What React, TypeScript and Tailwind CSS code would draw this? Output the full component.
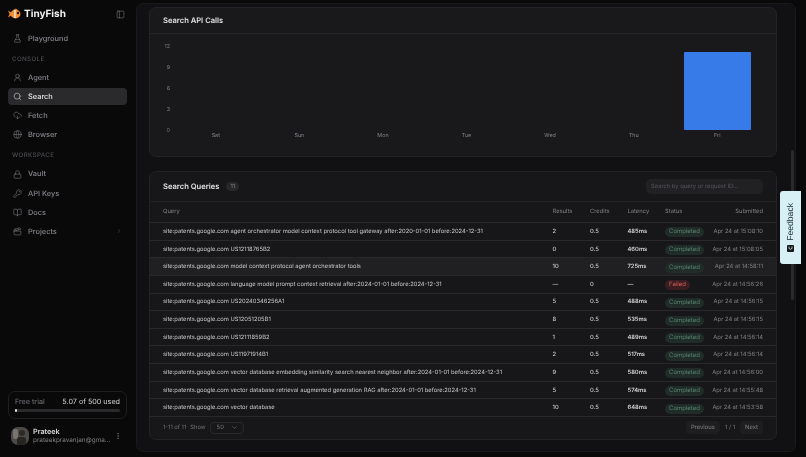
import { FlaskConical, UserRound, Search, CloudDownload, Globe, Lock, KeyRound, BookOpen, Clapperboard, PanelLeft, ChevronRight, ChevronDown, EllipsisVertical } from "lucide-react";
import type { ComponentType } from "react";

const font = "font-['Inter',sans-serif]";

function NavItem({ icon: Icon, label, active, chevron }: { icon: ComponentType<any>; label: string; active?: boolean; chevron?: boolean }) {
  return (
    <div className={`flex h-[17px] items-center gap-[6px] rounded-[4px] px-[4px] ${active ? "bg-[#2a2a2c] text-[#e4e4e6]" : "text-[#85858a]"}`}>
      <Icon size={9} strokeWidth={1.4} className="ml-[1px] shrink-0" />
      <span className="flex-1 text-[7.4px] font-medium leading-none">{label}</span>
      {chevron && <ChevronRight size={6} className="mr-[1px] text-[#55555a]" />}
    </div>
  );
}

function SectionLabel({ children }: { children: string }) {
  return <div className="px-[4px] pb-[4.5px] pt-[6.5px] text-[6.2px] font-medium leading-[7px] tracking-[0.06em] text-[#4d4d52]">{children}</div>;
}

function Sidebar() {
  return (
    <aside className="flex h-full w-[136px] shrink-0 flex-col pl-[8px] pr-[9px]">
      <div className="flex h-[28px] items-center justify-between pr-[2px]">
        <div className="flex items-center gap-[3px]">
          <svg width="13" height="12" viewBox="0 0 13 12">
            <path d="M0 2.5 L4 5 L4 7 L0 9.5 L1.5 6 Z" fill="#f0862c" />
            <ellipse cx="7.5" cy="6" rx="5" ry="4.4" fill="#f58f2e" />
            <path d="M5.5 1.8 L8 0.6 L9.5 2 Z" fill="#f0862c" />
            <rect x="6.2" y="2" width="1.4" height="8" fill="#fdf1df" />
            <circle cx="10" cy="5" r="1.2" fill="#1b1209" />
          </svg>
          <span className="text-[10px] font-bold leading-none text-[#f2f2f2]">TinyFish</span>
        </div>
        <PanelLeft size={9} strokeWidth={1.3} className="text-[#8a8a8e]" />
      </div>
      <div className="flex flex-col gap-[2.1px] pt-[2px]">
        <NavItem icon={FlaskConical} label="Playground" />
        <SectionLabel>CONSOLE</SectionLabel>
        <NavItem icon={UserRound} label="Agent" />
        <NavItem icon={Search} label="Search" active />
        <NavItem icon={CloudDownload} label="Fetch" />
        <NavItem icon={Globe} label="Browser" />
        <SectionLabel>WORKSPACE</SectionLabel>
        <NavItem icon={Lock} label="Vault" />
        <NavItem icon={KeyRound} label="API Keys" />
        <NavItem icon={BookOpen} label="Docs" />
        <NavItem icon={Clapperboard} label="Projects" chevron />
      </div>
      <div className="mt-auto">
        <div className="flex h-[28px] flex-col justify-center gap-[4px] rounded-[7px] border border-[#1e1e20] px-[6px]">
          <div className="flex items-center justify-between text-[7.2px] leading-none">
            <span className="text-[#77777b]">Free trial</span>
            <span className="text-[#d4d4d6]">5.07 of 500 used</span>
          </div>
          <div className="h-[3px] rounded-full bg-[#2a2a2d]">
            <div className="h-full w-[1.5px] rounded-full bg-[#e0e0e0]" />
          </div>
        </div>
        <div className="flex h-[38px] items-center gap-[4px] pb-[4px] pl-[3px] pr-[5px]">
          <div className="relative h-[18px] w-[18px] shrink-0 overflow-hidden rounded-[7px] bg-[#4c4a47]">
            <div className="absolute left-[2px] top-[2px] h-[10px] w-[5px] rounded-[2px] bg-[#77736f]" />
            <div className="absolute left-[8px] top-[3px] h-[6px] w-[6px] rounded-full bg-[#2c2a28]" />
            <div className="absolute bottom-0 left-[6px] h-[8px] w-[9px] rounded-t-[3px] bg-[#262523]" />
          </div>
          <div className="min-w-0 flex-1">
            <div className="text-[7.2px] font-semibold leading-[9px] text-[#dcdcde]">Prateek</div>
            <div className="whitespace-nowrap text-[6.4px] leading-[9px] text-[#808084]">prateekpravanjan@gma...</div>
          </div>
          <EllipsisVertical size={8} className="shrink-0 text-[#77777b]" />
        </div>
      </div>
    </aside>
  );
}

const days = ["Sat", "Sun", "Mon", "Tue", "Wed", "Thu", "Fri"];

function ChartCard() {
  return (
    <section className="rounded-[7px] border border-[#232326] bg-[#19191b]">
      <div className="flex h-[26px] items-center border-b border-[#262629] px-[13px]">
        <h2 className="text-[7.6px] font-semibold leading-none text-[#e0e0e2]">Search API Calls</h2>
      </div>
      <div className="flex pb-[17px] pl-[13px] pr-[14px] pt-[8.5px]">
        <div className="flex h-[92px] w-[7px] flex-col justify-between text-right text-[5.4px] leading-[8px] text-[#7c7c80]">
          <span>12</span><span>9</span><span>6</span><span>3</span><span>0</span>
        </div>
        <div className="ml-[4px] flex flex-1 pr-[3px] pt-[1.5px]">
          {days.map((d) => (
            <div key={d} className="flex flex-1 flex-col items-center">
              <div className="flex h-[86px] w-full items-end justify-center">
                {d === "Fri" && <div className="h-[78.5px] w-[67px] rounded-[1px] bg-[#377be9]" />}
              </div>
              <span className="pt-[3px] text-[5.4px] leading-[6px] text-[#85858a]">{d}</span>
            </div>
          ))}
        </div>
      </div>
    </section>
  );
}

type Row = { q: string; r: string; c: string; l: string; s: "Completed" | "Failed"; t: string; hi?: boolean };
const g = "site:patents.google.com ";
const rows: Row[] = [
  { q: g + "agent orchestrator model context protocol tool gateway after:2020-01-01 before:2024-12-31", r: "2", c: "0.5", l: "485ms", s: "Completed", t: "Apr 24 at 15:08:10" },
  { q: g + "US12118765B2", r: "0", c: "0.5", l: "460ms", s: "Completed", t: "Apr 24 at 15:08:05" },
  { q: g + "model context protocol agent orchestrator tools", r: "10", c: "0.5", l: "725ms", s: "Completed", t: "Apr 24 at 14:58:11", hi: true },
  { q: g + "language model prompt context retrieval after:2024-01-01 before:2024-12-31", r: "—", c: "0", l: "—", s: "Failed", t: "Apr 24 at 14:56:26" },
  { q: g + "US20240346256A1", r: "5", c: "0.5", l: "488ms", s: "Completed", t: "Apr 24 at 14:56:15" },
  { q: g + "US12051205B1", r: "8", c: "0.5", l: "535ms", s: "Completed", t: "Apr 24 at 14:56:15" },
  { q: g + "US12111859B2", r: "1", c: "0.5", l: "489ms", s: "Completed", t: "Apr 24 at 14:56:14" },
  { q: g + "US11971914B1", r: "2", c: "0.5", l: "517ms", s: "Completed", t: "Apr 24 at 14:56:14" },
  { q: g + "vector database embedding similarity search nearest neighbor after:2024-01-01 before:2024-12-31", r: "9", c: "0.5", l: "580ms", s: "Completed", t: "Apr 24 at 14:56:00" },
  { q: g + "vector database retrieval augmented generation RAG after:2024-01-01 before:2024-12-31", r: "5", c: "0.5", l: "574ms", s: "Completed", t: "Apr 24 at 14:55:48" },
  { q: g + "vector database", r: "10", c: "0.5", l: "648ms", s: "Completed", t: "Apr 24 at 14:53:58" },
];

const grid = "grid grid-cols-[1fr_37.5px_37.5px_37.5px_46px_52px] items-center px-[13px]";

function StatusBadge({ s }: { s: Row["s"] }) {
  return s === "Completed" ? (
    <span className="inline-flex h-[10px] items-center rounded-full bg-[#1f2c28] px-[4px] text-[6px] leading-none text-[#5a8270]">Completed</span>
  ) : (
    <span className="inline-flex h-[10px] items-center rounded-full bg-[#3a1d20] px-[4px] text-[6px] leading-none text-[#d95f5c]">Failed</span>
  );
}

function QueriesCard() {
  return (
    <section className="rounded-[7px] border border-[#232326] bg-[#171719]">
      <div className="flex h-[30px] items-center justify-between border-b border-[#232326] px-[13px]">
        <div className="flex items-center gap-[7px]">
          <h2 className="text-[7.6px] font-semibold leading-none text-[#e0e0e2]">Search Queries</h2>
          <span className="flex h-[9px] items-center rounded-full bg-[#27272a] px-[4px] text-[5.8px] leading-none text-[#8a8a8e]">11</span>
        </div>
        <div className="flex h-[15px] w-[117px] items-center rounded-[5px] bg-[#212124] px-[5px] text-[5.8px] leading-none text-[#56565a]">Search by query or request ID...</div>
      </div>
      <div className={`${grid} h-[21px] border-b border-[#29292c] text-[5.8px] leading-none text-[#808084]`}>
        <span>Query</span><span>Results</span><span>Credits</span><span>Latency</span><span>Status</span><span className="text-right">Submitted</span>
      </div>
      {rows.map((row) => (
        <div key={row.q} className={`${grid} h-[17.65px] border-b border-[#29292c] pt-[1px] text-[5.8px] leading-none ${row.hi ? "bg-[#202022]" : ""}`}>
          <span className="whitespace-nowrap text-[#cacacd]">{row.q}</span>
          <span className="font-medium text-[#cacacd]">{row.r}</span>
          <span className="font-medium text-[#cacacd]">{row.c}</span>
          <span className="font-semibold text-[#d4d4d6]">{row.l}</span>
          <span className="flex pt-[1px]"><StatusBadge s={row.s} /></span>
          <span className="whitespace-nowrap text-right text-[#828286]">{row.t}</span>
        </div>
      ))}
      <div className="flex h-[21.5px] items-center justify-between px-[13px] text-[5.8px] leading-none text-[#707074]">
        <div className="flex items-center gap-[4px]">
          <span>1-11 of 11</span>
          <span>Show</span>
          <div className="flex h-[12px] w-[34px] items-center justify-between rounded-[4px] border border-[#29292c] pl-[6px] pr-[5px] text-[#77777b]">
            <span>50</span>
            <ChevronDown size={7} />
          </div>
        </div>
        <div className="flex items-center gap-[4px]">
          <span className="flex h-[13px] items-center rounded-[4px] bg-[#1e1e20] px-[5px] font-medium text-[#77777b]">Previous</span>
          <span className="px-[1px] text-[#77777b]">1 / 1</span>
          <span className="flex h-[13px] items-center rounded-[4px] bg-[#1e1e20] px-[5px] font-medium text-[#77777b]">Next</span>
        </div>
      </div>
    </section>
  );
}

export default function App() {
  return (
    <div className={`${font} relative flex h-[457px] w-[806px] overflow-hidden bg-[#09090a] blur-[0.3px] [text-rendering:geometricPrecision]`}>
      <Sidebar />
      <main className="mb-[5px] mr-[10px] mt-[3px] flex-1 overflow-hidden rounded-[7px] border border-[#19191b] bg-[#111113]">
        <div className="flex h-full flex-col gap-[14px] pl-[12px] pr-[18px] pt-[3px]">
          <ChartCard />
          <QueriesCard />
        </div>
      </main>
      <div className="absolute left-[791px] top-[150px] h-[150px] w-[3px] rounded-full bg-[#2a2a2c]" />
      <div className="absolute left-[780px] top-[191px] flex h-[73px] w-[21px] flex-col items-center justify-center gap-[5px] rounded-l-[3px] bg-[#d6f0f6]">
        <span className="rotate-180 font-['Liberation_Sans',sans-serif] text-[8.6px] leading-none text-[#1c2a30] [writing-mode:vertical-rl]">Feedback</span>
        <svg width="7" height="7" viewBox="0 0 7 7">
          <rect width="7" height="7" rx="1" fill="#16181a" />
          <path d="M2 1.5 V3.5 Q3.5 5 5 3.5 V1.5" stroke="#d6f0f6" strokeWidth="0.8" fill="none" />
        </svg>
      </div>
    </div>
  );
}
